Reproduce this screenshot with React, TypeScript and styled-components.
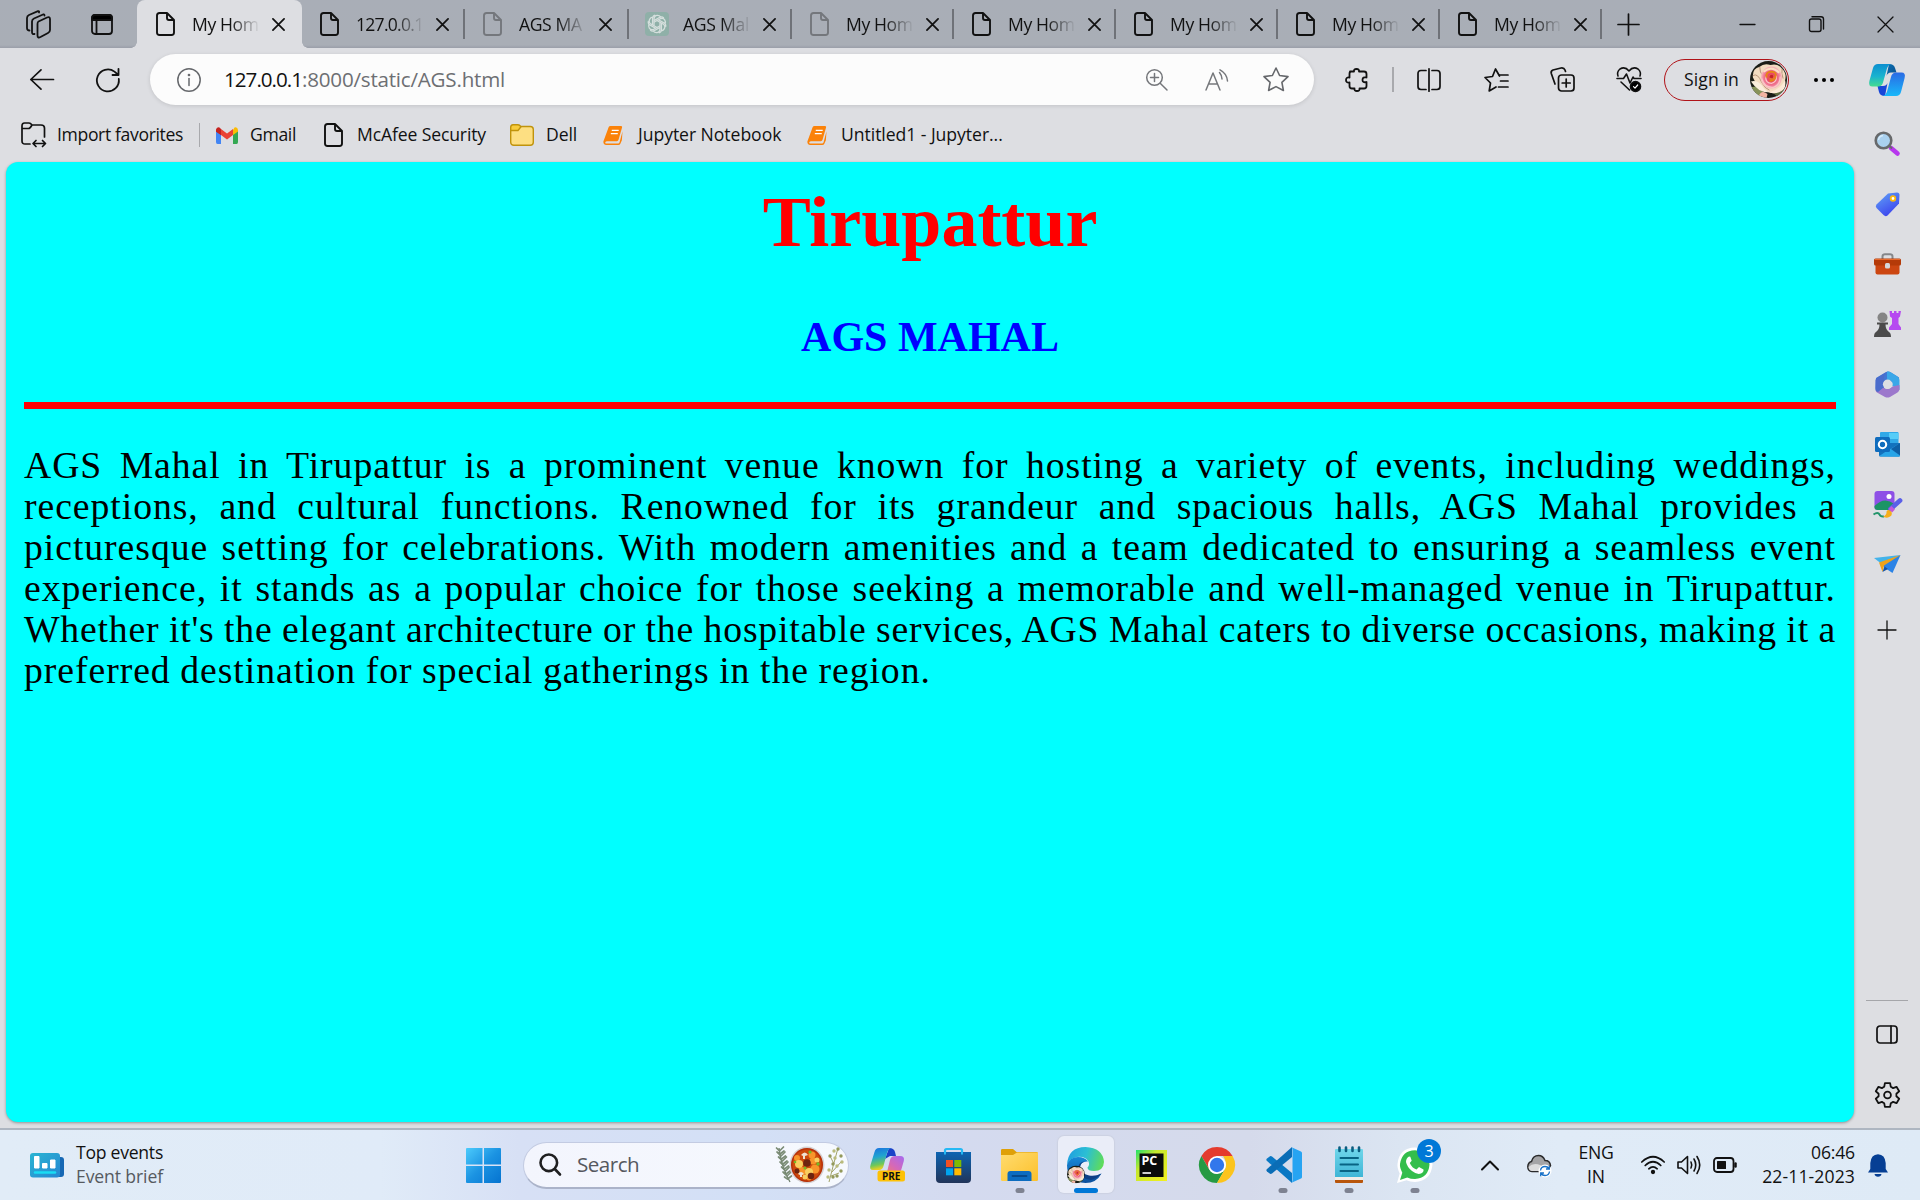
import React from "react";
import styled, { createGlobalStyle } from "styled-components";

const GlobalStyle = createGlobalStyle`
  * { box-sizing: border-box; }
  html, body { margin: 0; padding: 0; }
  body { width: 1920px; height: 1200px; overflow: hidden; font-family: "Open Sans", "Noto Sans", sans-serif; color: #111; }
  svg { display: block; flex: none; overflow: visible; }
`;

/* ---------- shared ---------- */

const Screen = styled.div`
  width: 1920px;
  height: 1200px;
  display: flex;
  flex-direction: column;
  background: #dddee2;
`;

const Label = styled.span<{ $size?: number; $track?: number; $color?: string }>`
  margin-bottom: 2px;
  font-size: ${(p) => p.$size ?? 17.6}px;
  letter-spacing: ${(p) => p.$track ?? 0}px;
  color: ${(p) => p.$color ?? "#111"};
  line-height: 22px;
  white-space: nowrap;
`;

const Slot = styled.span<{ $w: number; $ml?: number }>`
  flex: none;
  width: ${(p) => p.$w}px;
  margin-left: ${(p) => p.$ml ?? 0}px;
  display: flex;
  justify-content: center;
  align-items: center;
`;

const Rule = styled.span<{ $h: number; $ml?: number; $w?: number; $color?: string }>`
  flex: none;
  width: ${(p) => p.$w ?? 1}px;
  height: ${(p) => p.$h}px;
  margin-left: ${(p) => p.$ml ?? 0}px;
  background: ${(p) => p.$color ?? "#a8a9ad"};
`;

const Glyph = styled.svg.attrs({ xmlns: "http://www.w3.org/2000/svg" })<{ $color?: string; $weight?: number }>`
  fill: none;
  stroke: ${(p) => p.$color ?? "#111"};
  stroke-width: ${(p) => p.$weight ?? 1.6};
  stroke-linecap: round;
  stroke-linejoin: round;
`;

/* ---------- tab strip ---------- */

const TabStrip = styled.header`
  height: 48px;
  flex: none;
  display: flex;
  align-items: center;
  background: linear-gradient(#a9aeb7 0, #a9aeb6 45px, #9a9ea9 48px);
`;

const Tab = styled.div<{ $active?: boolean; $w: number }>`
  width: ${(p) => p.$w}px;
  height: 48px;
  flex: none;
  position: relative;
  display: flex;
  align-items: center;
  padding-left: ${(p) => (p.$active ? 19 : 18)}px;
  border-radius: 8px 8px 0 0;
  background: ${(p) => (p.$active ? "#dddee2" : "transparent")};
  ${(p) =>
    p.$active &&
    `
    &::before, &::after {
      content: "";
      position: absolute;
      bottom: 0;
      width: 6px;
      height: 6px;
    }
    &::before { left: -6px; background: radial-gradient(circle at 0 0, transparent 5.5px, #dddee2 6px); }
    &::after { right: -6px; background: radial-gradient(circle at 100% 0, transparent 5.5px, #dddee2 6px); }
  `}
`;

const TabTitle = styled.span<{ $track: number }>`
  width: 67px;
  margin-left: 17px;
  white-space: nowrap;
  font-size: 17.6px;
  line-height: 28px;
  letter-spacing: ${(p) => p.$track}px;
  color: #111;
  mask-image: linear-gradient(90deg, #000 38px, transparent 68px);
`;

const TabEnd = styled.span`
  margin-left: auto;
  width: 2px;
  height: 30px;
  background: #6f7278;
`;

const CloseMark = () => (
  <Glyph width="13" height="13" viewBox="0 0 14 14" $weight={1.9}>
    <path d="M1 1L13 13M13 1L1 13" />
  </Glyph>
);

const PageIcon = ({ faded = false }: { faded?: boolean }) => (
  <Glyph width="19" height="24" viewBox="0 0 19 24" $weight={1.9} $color={faded ? "#74777c" : "#111"}>
    <path d="M3.5 1H11L18 8V20.5Q18 23 15.5 23H3.5Q1 23 1 20.5V3.5Q1 1 3.5 1ZM11 1V6Q11 8 13 8H18" />
  </Glyph>
);

const ChatIcon = () => (
  <svg width="24" height="24" viewBox="0 0 24 24">
    <rect width="24" height="24" rx="4" fill="#8fb0a8" />
    <g fill="none" stroke="#d5dfdd" strokeWidth="1.3">
      {[0, 60, 120, 180, 240, 300].map((a) => (
        <path key={a} transform={`rotate(${a} 12 12)`} d="M9 13.8V7.2Q9 3.5 12.3 3.3Q14.4 3.2 15.7 4.8M9 8.6L14.8 5.3Q17 4.2 18.8 6" />
      ))}
    </g>
  </svg>
);

type TabInfo = { title: string; w: number; icon: "page" | "faded" | "chat"; track: number; active?: boolean };
const tabs: TabInfo[] = [
  { title: "My Hom", w: 165, icon: "page", track: -0.4, active: true },
  { title: "127.0.0.1", w: 163, icon: "page", track: -0.75 },
  { title: "AGS MA", w: 164, icon: "faded", track: -0.4 },
  { title: "AGS Mal", w: 163, icon: "chat", track: -0.3 },
  { title: "My Hom", w: 162, icon: "faded", track: -0.4 },
  { title: "My Hom", w: 162, icon: "page", track: -0.4 },
  { title: "My Hom", w: 162, icon: "page", track: -0.4 },
  { title: "My Hom", w: 162, icon: "page", track: -0.4 },
  { title: "My Hom", w: 162, icon: "page", track: -0.4 },
];

/* ---------- toolbar ---------- */

const Toolbar = styled.div`
  height: 63px;
  flex: none;
  display: flex;
  align-items: center;
`;

const AddressBar = styled.div`
  width: 1164px;
  height: 51px;
  margin-left: 30px;
  border-radius: 26px;
  background: #fcfcfc;
  box-shadow: 0 1px 4px rgba(0, 0, 0, 0.12);
  display: flex;
  align-items: center;
`;

const SignIn = styled.div`
  width: 125px;
  height: 42px;
  margin-left: 22px;
  padding: 0 1px 0 19px;
  border: 1.5px solid #b01218;
  border-radius: 21px;
  display: flex;
  align-items: center;
  justify-content: space-between;
`;

const Rose = ({ size }: { size: number }) => (
  <svg width={size} height={size} viewBox="0 0 38 38">
    <defs>
      <clipPath id={`rc${size}`}><circle cx="19" cy="19" r="19" /></clipPath>
      <radialGradient id={`rg${size}`}>
        <stop offset="0" stopColor="#e8901c" />
        <stop offset=".35" stopColor="#ea4466" />
        <stop offset=".75" stopColor="#f07f9a" />
        <stop offset="1" stopColor="#f8c6c0" />
      </radialGradient>
    </defs>
    <g clipPath={`url(#rc${size})`}>
      <rect width="38" height="38" fill="#1b1d16" />
      <path d="M0 27L8 26L14 32L9 38H0Z" fill="#87935a" />
      <path d="M24 33L34 27L38 34L30 38Z" fill="#5e6a40" />
      <path d="M3 17Q2 8 10 6Q14 2 21 4Q29 2 33 8Q38 13 36 20Q37 27 30 31Q24 35 17 31Q8 29 3 17Z" fill="#f3dcc0" />
      <path d="M1 21Q7 19 12 25Q15 30 20 32Q9 33 1 21Z" fill="#faeedc" />
      <path d="M36 20Q38 29 30 32Q24 34 20 32Q30 30 36 20Z" fill="#fbe9d6" />
      <path d="M3 15Q8 12 12 22Q15 28 20 30M10 6Q10 12 13 15M33 8Q32 13 34 18" stroke="#b08a70" strokeWidth=".9" fill="none" />
      <ellipse cx="22" cy="17" rx="11" ry="11.500" fill={`url(#rg${size})`} />
      <path d="M14 11Q22 4 30 12" fill="none" stroke="#fbe0c4" strokeWidth="2.200" />
      <path d="M12 18Q15 28 24 27Q31 25 31 16M16 16Q16 23 22 23Q28 21 27 15" fill="none" stroke="#fbc6c8" strokeWidth="1.300" />
      <path d="M17 17Q16 11 22 11Q28 11 26 17Q24 21 20 20" fill="none" stroke="#e6841a" strokeWidth="2" />
      <path d="M20 17Q20 14 22.500 14Q25 15 23 18Z" fill="#c8232e" />
      <path d="M9 36Q12 29 18 34L17 38H9Z" fill="#f2b4a2" />
    </g>
  </svg>
);

const CopilotIcon = () => (
  <svg width="36" height="32" viewBox="0 0 36 32">
    <defs>
      <linearGradient id="cpA" x1="0" y1="0" x2="0" y2="1"><stop offset="0" stopColor="#0c8fd0" /><stop offset=".55" stopColor="#19b3cf" /><stop offset="1" stopColor="#45dc90" /></linearGradient>
      <linearGradient id="cpB" x1="0" y1="1" x2="0" y2="0"><stop offset="0" stopColor="#18b8fa" /><stop offset="1" stopColor="#2a6ae4" /></linearGradient>
      <linearGradient id="cpC" x1="0" y1="0" x2="1" y2="1"><stop offset="0" stopColor="#0a6fb4" /><stop offset="1" stopColor="#0b4f8a" /></linearGradient>
    </defs>
    <path d="M20 0Q25 0 26 4L27.5 8.5H22Q18.500 8.500 17.500 12Z" fill="url(#cpC)" />
    <path d="M16 32Q11 32 10 28L8.5 22H14Q17.500 22 18.500 19Z" fill="#1746d8" />
    <path d="M9 0H22Q19 1 17.800 5L14 18.500Q13 22.500 9 22.500H3.500Q-1 22.500.4 17L4 4Q5.200 0 9 0Z" fill="url(#cpA)" />
    <path d="M27 32H14Q17 31 18.200 27L22 13Q23 8.500 27 8.500H32.500Q37 8.500 35.600 14L32 28Q30.800 32 27 32Z" fill="url(#cpB)" />
  </svg>
);

/* ---------- favourites ---------- */

const Favorites = styled.nav`
  height: 48px;
  flex: none;
  display: flex;
  align-items: center;
`;

const Fav = styled.div<{ $x: number; $gap: number }>`
  width: ${(p) => p.$x}px;
  flex: none;
  display: flex;
  align-items: center;
  gap: ${(p) => p.$gap}px;
`;

const BookIcon = () => (
  <svg width="20" height="21" viewBox="0 0 21 20">
    <path d="M6 1.200Q6.400 0 8 0H19Q20.500 0 20 1.600L16.300 14.500Q15.800 16 14.500 16H4Q2.300 16.300 2.300 17.500Q2.500 18.500 4 18.500H15.800Q17 18.500 17.400 17.200L20.500 5.500L19.800 15L18.200 18.600Q17.600 20 16 20H3.500Q.2 19.800.4 16.200Z" fill="#fb8209" />
    <path d="M9.200 4.500H16.500M8.200 8H15.500" stroke="#fff" strokeWidth="1.300" />
  </svg>
);

/* ---------- middle: page + sidebar ---------- */

const Middle = styled.div`
  height: 966px;
  flex: none;
  display: flex;
  padding-left: 6px;
`;

const Page = styled.main`
  width: 1848px;
  height: 960px;
  padding: 19px 18px 0;
  border-radius: 12px;
  background: #00ffff;
  box-shadow: 0 1px 3px rgba(0, 0, 0, 0.35);
  font-family: "Liberation Serif", "Times New Roman", serif;
`;

const Title = styled.h1`
  margin: 0;
  font-size: 72px;
  line-height: 82px;
  text-align: center;
  color: #ff0000;
`;

const Subtitle = styled.h2`
  margin: 50px 0 0;
  font-size: 42px;
  line-height: 48px;
  text-align: center;
  color: #0000ff;
`;

const RedLine = styled.hr`
  margin: 41px 0 36px;
  height: 7px;
  border: 0;
  background: #ff0000;
`;

const Line = styled.div<{ $last?: boolean; $track?: number }>`
  height: 41.1px;
  font-size: 37.7px;
  line-height: 41px;
  white-space: nowrap;
  letter-spacing: ${(p) => p.$track ?? 0.95}px;
  word-spacing: -0.75px;
  color: #000;
  text-align: left;
  text-align-last: ${(p) => (p.$last ? "left" : "justify")};
`;

const lines = [
  "AGS Mahal in Tirupattur is a prominent venue known for hosting a variety of events, including weddings,",
  "receptions, and cultural functions. Renowned for its grandeur and spacious halls, AGS Mahal provides a",
  "picturesque setting for celebrations. With modern amenities and a team dedicated to ensuring a seamless event",
  "experience, it stands as a popular choice for those seeking a memorable and well-managed venue in Tirupattur.",
  "Whether it's the elegant architecture or the hospitable services, AGS Mahal caters to diverse occasions, making it a",
  "preferred destination for special gatherings in the region.",
];

const Sidebar = styled.aside`
  width: 66px;
  height: 960px;
  display: flex;
  flex-direction: column;
  align-items: center;
  padding-top: 12px;
`;

const SideItem = styled.div<{ $h?: number }>`
  height: ${(p) => p.$h ?? 60}px;
  flex: none;
  display: flex;
  align-items: center;
  justify-content: center;
`;

const SideRule = styled.div`
  width: 42px;
  height: 1px;
  margin-top: auto;
  background: #a5a6aa;
`;

const Upper = styled.div`
  display: flex;
  flex: none;
  height: 114px;
`;

const UpperBars = styled.div`
  width: 1854px;
  display: flex;
  flex-direction: column;
`;

const UpperSide = styled.div`
  width: 66px;
  display: flex;
  flex-direction: column;
  align-items: center;
`;

/* ---------- taskbar ---------- */

const Taskbar = styled.footer`
  height: 72px;
  flex: none;
  display: flex;
  align-items: center;
  border-top: 2px solid #aeb6c1;
  background: linear-gradient(90deg, #e1ecf7 0, #e0ebf8 380px, #d7e0f5 520px, #d3e0f6 760px, #d4daef 960px, #d5daeb 1250px, #dbe5f2 1400px, #e0ebf7 1560px, #deeaf6 1920px);
`;

const TwoLines = styled.div<{ $align: string; $ml: number; $w: number }>`
  width: ${(p) => p.$w}px;
  margin-left: ${(p) => p.$ml}px;
  flex: none;
  display: flex;
  flex-direction: column;
  align-items: ${(p) => p.$align};
`;

const SearchBox = styled.div`
  width: 326px;
  height: 47px;
  margin: 0 6px 0 7px;
  padding: 0 6px 0 15px;
  border: 1.5px solid #c3cbe2;
  border-bottom: 2px solid #abb3c9;
  border-radius: 24px;
  background: linear-gradient(90deg, #f3f5fd, #f6f9fe);
  display: flex;
  align-items: center;
`;

const AppButton = styled.div<{ $active?: boolean; $run?: boolean }>`
  width: 65.9px;
  height: 70px;
  flex: none;
  position: relative;
  display: flex;
  align-items: center;
  justify-content: center;
  &::before {
    content: "";
    display: ${(p) => (p.$active ? "block" : "none")};
    position: absolute;
    left: 5px;
    top: 6px;
    width: 56px;
    height: 57px;
    border-radius: 6px;
    background: #eaedf8;
    box-shadow: 0 0 1px 1px #ccd1e2;
  }
  &::after {
    content: "";
    display: ${(p) => (p.$active || p.$run ? "block" : "none")};
    position: absolute;
    bottom: 7px;
    left: 50%;
    width: ${(p) => (p.$active ? 24 : 9)}px;
    height: 5px;
    border-radius: 3px;
    transform: translateX(-50%);
    background: ${(p) => (p.$active ? "#0078d7" : "#7e8291")};
  }
  > svg { position: relative; }
`;

const Badge = styled.span`
  position: absolute;
  left: 35px;
  top: 9px;
  width: 24px;
  height: 24px;
  border-radius: 12px;
  background: #0078d7;
  color: #fff;
  font-size: 16px;
  line-height: 24px;
  text-align: center;
`;

const WeatherIcon = () => (
  <svg width="34" height="25" viewBox="0 0 34 25">
    <defs><linearGradient id="wi" x1="0" y1="0" x2="1" y2="1"><stop offset="0" stopColor="#2bb5d2" /><stop offset="1" stopColor="#2487d3" /></linearGradient></defs>
    <rect x="20" y="4" width="14" height="20" rx="3" fill="#1668b4" />
    <rect y="0" width="30" height="24.500" rx="3" fill="url(#wi)" />
    <path d="M4.500 3.500H9V15H4.500ZM12.500 10.500H17V15H12.500ZM20.500 7H25V15H20.500Z" fill="#fff" stroke="#fff" strokeLinejoin="round" />
    <path d="M5 19.500H25" stroke="#19dcf4" strokeWidth="2.500" strokeLinecap="round" />
  </svg>
);

const StartIcon = () => (
  <svg width="35" height="35" viewBox="0 0 35 35">
    <defs><linearGradient id="st" x1="0" y1="0" x2="1" y2="1" gradientUnits="objectBoundingBox"><stop offset="0" stopColor="#4ccbfc" /><stop offset=".5" stopColor="#1b93e2" /><stop offset="1" stopColor="#0573d0" /></linearGradient></defs>
    <path d="M1 0H16.500V16.500H0V1Q0 0 1 0ZM18 0H34Q35 0 35 1V16.500H18ZM0 18H16.500V35H1Q0 35 0 34ZM18 18H35V34Q35 35 34 35H18Z" fill="url(#st)" />
  </svg>
);

const StewIcon = () => {
  const herb = [4, 9, 14, 19, 24, 29];
  return (
    <svg width="68" height="42" viewBox="0 0 68 42">
      <path d="M3 4Q5 22 14 38" stroke="#6f7f6c" strokeWidth="1.300" fill="none" />
      {herb.map((y, i) => (
        <path key={y} d={`M${3.500 + i * 1.500} ${y + 3}l-3-3m3 3l4-4M${4 + i * 1.500} ${y + 6}l-3-2m3 2l4-3`} stroke="#7b8c76" strokeWidth="1.700" strokeLinecap="round" />
      ))}
      <path d="M53 38Q57 22 62 4M56 28L65 18M55 32L63 29M58 20L54 12" stroke="#a2a368" strokeWidth="1" fill="none" />
      {[[62, 5], [58, 7], [54, 12], [59, 14], [65, 12], [66, 18], [57, 20], [61, 22], [65, 27], [53, 26], [61, 32], [52, 33], [57, 33]].map(([x, y], i) => (
        <circle key={i} cx={x} cy={y} r="1.700" fill={i % 2 ? "#b9bb7c" : "#93995a"} />
      ))}
      <ellipse cx="31" cy="21" rx="17.500" ry="18.500" fill="#d4d0d2" />
      <ellipse cx="31" cy="21" rx="16" ry="17" fill="#b83008" />
      <ellipse cx="31" cy="21" rx="14.500" ry="15.500" fill="#cd4a0c" />
      <g fill="#f8952a"><circle cx="36" cy="11" r="3.500" /><circle cx="26" cy="27" r="4" /><circle cx="39" cy="25" r="4.500" /><circle cx="37" cy="17" r="3.500" /><circle cx="21" cy="14" r="3" /><circle cx="33" cy="34" r="2.500" /></g>
      <g fill="#f8cf60"><circle cx="23" cy="20" r="4" /><circle cx="33" cy="28" r="4" /><circle cx="41" cy="16" r="2.500" /><circle cx="29" cy="33" r="2.500" /></g>
      <g fill="#6d2410"><circle cx="31" cy="19" r="3.800" /><circle cx="35" cy="32" r="3.200" /><circle cx="21" cy="27" r="2.500" /></g>
      <g fill="#eee3d2"><path d="M25 11Q29 6 32 11L29 12V15H27V12ZM22 30Q25 26 28 30L26 31V33H24V31Z" /></g>
      <g fill="#75b928"><circle cx="34" cy="8" r="1.600" /><circle cx="42" cy="20" r="1.700" /><circle cx="29" cy="24" r="1.500" /><circle cx="19" cy="18" r="1.300" /></g>
    </svg>
  );
};

const CopilotPre = () => (
  <svg width="35" height="34" viewBox="0 0 35 34">
    <defs>
      <linearGradient id="pa" x1="0" y1="0" x2=".2" y2="1"><stop offset="0" stopColor="#1a6fe0" /><stop offset=".45" stopColor="#20a5d0" /><stop offset=".8" stopColor="#70c858" /><stop offset="1" stopColor="#e8d024" /></linearGradient>
      <linearGradient id="pb" x1="1" y1="0" x2=".2" y2="1"><stop offset="0" stopColor="#a56af0" /><stop offset=".5" stopColor="#d568b8" /><stop offset="1" stopColor="#fa8060" /></linearGradient>
    </defs>
    <path d="M19 0Q24 0 25 4L26 8H20L15 11Z" fill="#1a42c8" />
    <path d="M9 0H21Q18 1 17 5L13.500 18Q12.500 22 9 22H3Q-1 22 .5 17L4.500 4Q5.500 0 9 0Z" fill="url(#pa)" />
    <path d="M26 30H12Q16 28 17 24L20 12Q21 8 25 8H30Q35 8 33.800 13L30 26Z" fill="url(#pb)" />
    <rect x="7.500" y="22.500" width="27.500" height="11" rx="2.500" fill="#fdc106" />
    <text x="21.200" y="31.700" textAnchor="middle" fontFamily="Open Sans" fontWeight="700" fontSize="10" fill="#111">PRE</text>
  </svg>
);

const StoreIcon = () => (
  <svg width="35" height="35" viewBox="0 0 35 35">
    <defs><linearGradient id="so" x1="0" y1="0" x2="0" y2="1"><stop offset="0" stopColor="#0d64b2" /><stop offset="1" stopColor="#213459" /></linearGradient></defs>
    <path d="M9 6V2.500Q9 1 10.500 1H24.500Q26 1 26 2.500V6" fill="none" stroke="#25b9f4" strokeWidth="2.200" />
    <path d="M0 4H35V31Q35 35 31 35H4Q0 35 0 31Z" fill="url(#so)" />
    <path d="M9 4V6.500M26 4V6.500" stroke="#25b9f4" strokeWidth="2" />
    <path d="M10 12H17V19H10Z" fill="#f25022" /><path d="M18.300 12H25.300V19H18.300Z" fill="#7fba00" />
    <path d="M10 20.300H17V27.300H10Z" fill="#00a4ef" /><path d="M18.300 20.300H25.300V27.300H18.300Z" fill="#ffb900" />
  </svg>
);

const FolderIcon = () => (
  <svg width="37" height="34" viewBox="0 0 37 34">
    <defs><linearGradient id="fo" x1="0" y1="0" x2="1" y2="1"><stop offset="0" stopColor="#ffdc70" /><stop offset="1" stopColor="#fcc02a" /></linearGradient></defs>
    <path d="M0 2Q0 1 1.500 1H12L15.500 4H35.500Q37 4 37 5.500V12H0Z" fill="#dfa008" />
    <path d="M0 7H12L16 4.500H37V32Q37 33 35.500 33H1.500Q0 33 0 32Z" fill="url(#fo)" />
    <path d="M6.500 33V26Q6.500 23 9.500 23H27.500Q30.500 23 30.500 26V33Z" fill="#0c6cc0" />
    <path d="M11.500 28H25.500" stroke="#064a8c" strokeWidth="1.800" strokeLinecap="round" />
  </svg>
);

const EdgeIcon = () => (
  <svg width="37" height="36" viewBox="0 0 37 36">
    <defs>
      <linearGradient id="ea" x1="0" y1=".3" x2="1" y2=".5"><stop offset="0" stopColor="#1f9fe0" /><stop offset=".5" stopColor="#2bbfd4" /><stop offset="1" stopColor="#5fdc5a" /></linearGradient>
      <linearGradient id="eb" x1="0" y1="0" x2="0" y2="1"><stop offset="0" stopColor="#1789d8" /><stop offset="1" stopColor="#0d4f9c" /></linearGradient>
    </defs>
    <path d="M0 18Q1 0 18.500 0Q36 1 37 15Q36.500 24 27 24Q20.500 24 20.500 20.500Q23 18 21.500 14.500Q18 9 10 10Q3 11 0 18Z" fill="url(#ea)" />
    <path d="M0 18Q3 10 11 10Q18 10 21 14.500Q13.500 14 13 20.500Q13.500 27 22 29Q29 30 34.500 26.500Q29.500 36 18.500 36Q0 35 0 18Z" fill="url(#eb)" />
    <path d="M11.500 19Q10 31 24 33Q30 31.500 34.500 26.500Q29 29.500 22 28.500Q13.500 26.500 13 20Q13.500 15.500 18 14.500Q13 14.500 11.500 19Z" fill="#0d3f86" />
    <g transform="translate(0 18.500) scale(.94)"><Rose size={19} /></g>
  </svg>
);

const PyCharmIcon = () => (
  <svg width="31" height="31" viewBox="0 0 31 31">
    <defs><linearGradient id="py" x1="0" y1="0" x2="1" y2="1"><stop offset="0" stopColor="#21e06c" /><stop offset=".35" stopColor="#c6e82c" /><stop offset="1" stopColor="#f3f020" /></linearGradient></defs>
    <rect width="31" height="31" fill="url(#py)" />
    <rect x="3.500" y="3.500" width="24" height="23.500" fill="#0a0c0a" />
    <text x="5.500" y="15" fontFamily="Open Sans" fontWeight="700" fontSize="12.500" fill="#fff">PC</text>
    <path d="M6.500 23H15" stroke="#fff" strokeWidth="1.600" />
  </svg>
);

const ChromeIcon = () => (
  <svg width="36" height="36" viewBox="0 0 36 36">
    <path d="M18 0A18 18 0 0 1 33.600 9H18L10.200 22.500L2.400 9A18 18 0 0 1 18 0Z" fill="#e43b2e" />
    <path d="M2.400 9L10.200 22.500Q13 27 18 27L25.800 22.500L18 36A18 18 0 0 1 2.400 9Z" fill="#269a43" />
    <path d="M33.600 9A18 18 0 0 1 18 36L25.800 22.500Q28.500 15 24 9Z" fill="#fcc41c" />
    <circle cx="18" cy="18" r="9" fill="#fff" /><circle cx="18" cy="18" r="7.200" fill="#3277ec" />
  </svg>
);

const CodeIcon = () => (
  <svg width="37" height="36" viewBox="0 0 37 36">
    <path d="M2 11.500L5 9.200Q6 8.800 7 9.500L27 26V36L1.800 13.800Q.8 12.500 2 11.500Z" fill="#0a78c4" />
    <path d="M2 24.500L5 26.800Q6 27.200 7 26.500L27 10V0L1.800 22.200Q.8 23.500 2 24.500Z" fill="#0a6db6" />
    <path d="M26.500.2L36 4.500Q37 5 37 6V30Q37 31 36 31.500L26.500 35.800Q27.500 35 27.500 33V3Q27.500 1 26.500.2Z" fill="#27a4f2" />
  </svg>
);

const NotepadIcon = () => (
  <svg width="28" height="36" viewBox="0 0 28 36">
    <defs><linearGradient id="np" x1="0" y1="0" x2="0" y2="1"><stop offset="0" stopColor="#6fd6ea" /><stop offset="1" stopColor="#3fb5d6" /></linearGradient></defs>
    <path d="M0 30H28V35Q28 36 27 36H1Q0 36 0 35Z" fill="#b8560c" />
    <rect y="29" width="28" height="4" fill="#f0ece8" />
    <path d="M0 3Q0 2 1 2H27Q28 2 28 3V30H0Z" fill="url(#np)" />
    <path d="M4.500.5V4M11 .5V4M17.500.5V4M24 .5V4" stroke="#0b5d80" strokeWidth="2.600" strokeLinecap="round" />
    <path d="M5.500 11H23M5.500 17.500H23M5.500 24H23" stroke="#086484" strokeWidth="2" strokeLinecap="round" />
  </svg>
);

const WhatsAppIcon = () => (
  <svg width="36" height="36" viewBox="0 0 36 36">
    <path d="M0 36L2.700 26.500Q0 21 .5 17Q2 1 18 .5Q34 2 35.500 17.500Q34 34 18 35Q13 35 9.500 33.300Z" fill="#fff" />
    <path d="M3 33L5.300 25.700Q2.500 20 3 17Q5 3.500 18 3.200Q31 4 32.500 17.500Q31.500 31 18 32Q13.500 32 10.200 30.500Z" fill="#33be4c" />
    <path d="M12 9.500Q9 11 9 15Q10 20 15 24Q20 28 24 26.500Q27 25 26.500 22.500L22 20L19.500 22.500Q15 21 12.800 16L14.700 13.800L13.300 9.800Z" fill="#fff" />
  </svg>
);

/* ---------- root ---------- */

export default function App() {
  return (
    <Screen>
      <GlobalStyle />
      <TabStrip>
        <Slot $w={25} $ml={26}>
          <Glyph width="25" height="29" viewBox="0 0 25 29" $weight={1.8}>
            <path d="M12.500 11.500L21 7.500Q24 6.500 24 9V20Q24 22 22 23L14.500 27Q11.500 28.500 11.500 25.500V14Q11.500 12 12.500 11.500Z" />
            <path d="M8.500 24Q6 24.500 6 22V11.500Q6 9.500 8 8.500L17 4.500M3.500 20.500Q1 20.500 1 18V8Q1 6 3 5L12 1.200Q13.500.8 13 2.500M17 4.500Q18.500 4 18.500 5.500" />
          </Glyph>
        </Slot>
        <Slot $w={22} $ml={40}>
          <Glyph width="22" height="21" viewBox="0 0 22 21" $weight={1.8}>
            <rect x="1" y="1" width="20" height="19" rx="3" />
            <path d="M1 6V4Q1 1 4 1H18Q21 1 21 4V6Z" fill="#000" />
            <path d="M5.500 6V20" />
          </Glyph>
        </Slot>
        <Slot $w={24} />
        {tabs.map((t, i) => (
          <Tab key={i} $w={t.w} $active={t.active}>
            {t.icon === "chat" ? <Slot $w={19}><ChatIcon /></Slot> : <PageIcon faded={t.icon === "faded"} />}
            <TabTitle $track={t.track}>{t.title}</TabTitle>
            <Slot $w={14} $ml={12}><CloseMark /></Slot>
            {!t.active && <TabEnd />}
          </Tab>
        ))}
        <Slot $w={22} $ml={15}>
          <Glyph width="21" height="21" viewBox="0 0 21 21" $weight={1.7}><path d="M10.500 0V21M0 10.500H21" /></Glyph>
        </Slot>
        <Slot $w={16} $ml={100}>
          <Glyph width="15" height="15" viewBox="0 0 15 15" $weight={1.300}><path d="M0 7.500H15" /></Glyph>
        </Slot>
        <Slot $w={16} $ml={53}>
          <Glyph width="15" height="16" viewBox="0 0 15 16" $weight={1.400}>
            <rect x=".5" y="3" width="11.500" height="12.500" rx="2" /><path d="M3 .7H12Q14.500.7 14.500 3V13" />
          </Glyph>
        </Slot>
        <Slot $w={16} $ml={53}>
          <Glyph width="15" height="15" viewBox="0 0 15 15" $weight={1.300}><path d="M0 0L15 15M15 0L0 15" /></Glyph>
        </Slot>
      </TabStrip>

      <Upper>
        <UpperBars>
          <Toolbar>
            <Slot $w={24} $ml={30}>
              <Glyph width="24" height="21" viewBox="0 0 24 21" $weight={1.700}><path d="M23.500 10.500H.8M11 .8L.8 10.500L11 20.200" /></Glyph>
            </Slot>
            <Slot $w={24} $ml={42}>
              <Glyph width="24" height="24" viewBox="0 0 24 24" $weight={1.800}>
                <path d="M22.800 11A11 11 0 1 1 18.500 3.600L22.500 7M22.500.8V7H16.500" />
              </Glyph>
            </Slot>
            <AddressBar>
              <Slot $w={24} $ml={27}>
                <Glyph width="24" height="24" viewBox="0 0 24 24" $color="#66686c" $weight={1.500}>
                  <circle cx="12" cy="12" r="11.200" /><path d="M12 10.500V17.500" /><circle cx="12" cy="7" r=".6" fill="#66686c" />
                </Glyph>
              </Slot>
              <Slot $w={23} />
              <Label $size={20.6} $track={-0.98}>127.0.0.1</Label>
              <Label $size={20.6} $track={-0.22} $color="#6d6f73">:8000/static/AGS.html</Label>
              <Slot $w={22} $ml={641}>
                <Glyph width="22" height="22" viewBox="0 0 22 22" $color="#75777b" $weight={1.500}>
                  <circle cx="8.500" cy="8.500" r="7.800" /><path d="M14.200 14.200L21 21M8.500 4.500V12.500M4.500 8.500H12.500" />
                </Glyph>
              </Slot>
              <Slot $w={24} $ml={37}>
                <Glyph width="24" height="22" viewBox="0 0 24 22" $color="#75777b" $weight={1.500}>
                  <path d="M1 21L8 4L15 21M3.500 15H12.500M14.500 3.500Q17 6.500 17 10M15 .8Q22 4.500 22.500 12" />
                </Glyph>
              </Slot>
              <Slot $w={26} $ml={34}>
                <Glyph width="26" height="25" viewBox="0 0 26 25" $color="#66686c" $weight={1.600}>
                  <path d="M13 1L16.600 8.500L25 9.600L18.900 15.300L20.400 23.500L13 19.600L5.600 23.500L7.100 15.300L1 9.600L9.400 8.500Z" />
                </Glyph>
              </Slot>
            </AddressBar>
            <Slot $w={24} $ml={31}>
              <Glyph width="24" height="24" viewBox="0 0 24 24" $weight={1.800}>
                <path d="M5 3.500H9Q8.500 1 11.500 1Q14.500 1 14 3.500H19Q21.500 3.500 21.500 6V9.500Q17.500 8.500 17.500 12Q17.500 15 21.500 14V18Q21.500 20.500 19 20.500H14.500Q15 23 12 23Q9 23 9.500 20.500H7Q4.500 20.500 4.500 18V14.500Q1 15 1 12Q1 9 4.500 9.500V6Q4.500 3.500 6 3.500" />
              </Glyph>
            </Slot>
            <Rule $h={25} $w={2} $ml={23} />
            <Slot $w={24} $ml={23}>
              <Glyph width="24" height="24" viewBox="0 0 24 24" $weight={1.700}>
                <path d="M9 2.500H4Q1 2.500 1 5.500V18.500Q1 21.500 4 21.500H9M15 2.500H20Q23 2.500 23 5.500V18.500Q23 21.500 20 21.500H15M12 .8V23.200" />
              </Glyph>
            </Slot>
            <Slot $w={26} $ml={42}>
              <Glyph width="25" height="24" viewBox="0 0 25 24" $weight={1.700}>
                <path d="M15.500 7H24M16.500 13H24M14.500 19H24" />
                <path d="M15.500 8L11.500 1L8.500 8.500L1 9.500L6.500 15L5.200 23L12 19" />
              </Glyph>
            </Slot>
            <Slot $w={25} $ml={41}>
              <Glyph width="25" height="25" viewBox="0 0 25 25" $weight={1.700}>
                <rect x="8.500" y="8" width="15.500" height="16" rx="3" /><path d="M16.200 12V20M12.200 16H20.200" />
                <path d="M5 17L1.300 6.500Q.5 4 3 3L11 1Q14 .5 15 3L15.500 4.500" />
              </Glyph>
            </Slot>
            <Slot $w={26} $ml={41}>
              <Glyph width="26" height="25" viewBox="0 0 26 25" $weight={1.600}>
                <path d="M2 9Q.5 5 4 2Q9-1 13 4Q17-1 22 2Q25.500 5 24 9M1 11.500H7.500L10.500 7L14 16L17 10L18 11.500H25M5 15L13.500 23" />
                <circle cx="19.500" cy="19.500" r="5" fill="#000" /><path d="M17.500 19.700L19 21.200L21.700 18" stroke="#fff" strokeWidth="1.200" />
              </Glyph>
            </Slot>
            <SignIn>
              <Label $track={0.1}>Sign in</Label>
              <Rose size={37} />
            </SignIn>
            <Slot $w={22} $ml={24}>
              <svg width="20" height="4" viewBox="0 0 20 4"><circle cx="2" cy="2" r="2" /><circle cx="10" cy="2" r="2" /><circle cx="18" cy="2" r="2" /></svg>
            </Slot>
          </Toolbar>

          <Favorites>
            <Slot $w={21} />
            <Fav $x={195} $gap={11}>
              <Glyph width="25" height="26" viewBox="0 0 25 26" $weight={1.700}>
                <path d="M9 22H4Q1 22 1 19V4Q1 1 3.500 1H8Q9.500 1 11 3H20Q23.500 3 23.500 6V15M1 6.500H7.500Q9 6.500 11 3" />
                <path d="M12.500 21.500H24M15 18.500L12 21.500L15 24.500M21.500 18.500L24.500 21.500L21.500 24.500" />
              </Glyph>
              <Label $track={-0.36}>Import favorites</Label>
              <Rule $h={24} $ml={5} />
            </Fav>
            <Fav $x={108} $gap={12}>
              <svg width="22" height="17" viewBox="0 0 22 17">
                <path d="M0 3V15Q0 17 1.500 17H5V6Z" fill="#4285f4" /><path d="M22 3V15Q22 17 20.500 17H17V6Z" fill="#34a853" />
                <path d="M17 3V8L22 4.500V3Q21.500-.5 18.500.5Z" fill="#fbbc04" /><path d="M0 3V4.500L5 8V3Q2-.5 0 3Z" fill="#c5221f" />
                <path d="M5 8V2L11 6.500L17 2V8L11 12.500Z" fill="#ea4335" /><path d="M0 3Q.5-.5 3.500.5L5 2V8L0 4.500Z" fill="#c5221f" />
              </svg>
              <Label $track={-0.35}>Gmail</Label>
            </Fav>
            <Fav $x={186} $gap={14}><PageIcon /><Label $track={-0.14}>McAfee Security</Label></Fav>
            <Fav $x={93} $gap={12}>
              <svg width="24" height="22" viewBox="0 0 24 22">
                <rect x=".7" y="2.500" width="22.600" height="18.800" rx="3" fill="#fddf82" stroke="#c0930c" strokeWidth="1.400" />
                <path d="M.7 6V3.500Q.7.700 3 .7H8Q9.500.7 11 2.800L8 6.500H.7Z" fill="#f8cc3c" stroke="#c0930c" strokeWidth="1.400" />
              </svg>
              <Label $track={-0.13}>Dell</Label>
            </Fav>
            <Fav $x={204} $gap={15}><BookIcon /><Label $track={-0.05}>Jupyter Notebook</Label></Fav>
            <Fav $x={220} $gap={14}><BookIcon /><Label $track={-0.05}>Untitled1 - Jupyter...</Label></Fav>
          </Favorites>
        </UpperBars>

        <UpperSide>
          <SideItem $h={64}><CopilotIcon /></SideItem>
          <SideItem $h={62}>
            <svg width="26" height="25" viewBox="0 0 26 25">
              <path d="M17 17L23.500 22.500" stroke="#b737ee" strokeWidth="4.600" strokeLinecap="round" />
              <path d="M15 14.500L18 17.500" stroke="#68696c" strokeWidth="2" />
              <circle cx="9.500" cy="9.500" r="7.800" fill="#a9d0ee" stroke="#67696b" strokeWidth="2.600" />
              <path d="M4.500 9Q5 5 9 4.500" stroke="#d6ebfa" strokeWidth="1.500" fill="none" />
            </svg>
          </SideItem>
        </UpperSide>
      </Upper>

      <Middle>
        <Page>
          <Title>Tirupattur</Title>
          <Subtitle>AGS MAHAL</Subtitle>
          <RedLine />
          {lines.map((l, i) => (
            <Line key={i} $last={i === 5} $track={i === 4 ? 0.8 : 0.95}>{l}</Line>
          ))}
        </Page>
        <Sidebar>
          <SideItem>
            <svg width="25" height="25" viewBox="0 0 25 25">
              <defs><linearGradient id="tg" x1="0" y1="0" x2=".6" y2="1"><stop offset="0" stopColor="#62a6f6" /><stop offset="1" stopColor="#3c44ee" /></linearGradient></defs>
              <path d="M13 1.500L22 .5Q24.500.5 24.500 3L24 11.500L12.500 23.500Q10.500 25 8.500 23L1.500 16Q0 14 1.500 12.500Z" fill="url(#tg)" />
              <circle cx="18" cy="6.500" r="2.300" fill="#fff" stroke="#fcb80c" strokeWidth="1.800" />
            </svg>
          </SideItem>
          <SideItem>
            <svg width="27" height="22" viewBox="0 0 27 22">
              <path d="M8.500 6V3.500Q8.500 1.200 11 1.200H16Q18.500 1.200 18.500 3.500V6" fill="none" stroke="#85878a" strokeWidth="2" />
              <rect x="1.500" y="9" width="24" height="12.500" rx="2" fill="#cc4611" />
              <rect x="0" y="5.500" width="27" height="7" rx="1.500" fill="#b43a08" /><path d="M1 6.500H26" stroke="#e86a2c" />
              <rect x="11" y="10" width="5" height="5.500" rx="1.500" fill="#d6d8da" />
            </svg>
          </SideItem>
          <SideItem>
            <svg width="27" height="28" viewBox="0 0 27 28">
              <path d="M15.500 1H18V3H20V1H22.500V3H24.500V1H27L26 6.500L24.500 8V14L27 17.500V20H15V17.500L18 14V8L16 6.500Z" fill="#b64af0" />
              <circle cx="8.500" cy="7.500" r="5" fill="#858585" />
              <path d="M3 12.500H14V14.500H11.500Q11.500 19.500 15 22Q17 23 17 27H0Q0 23 2 22Q5.500 19.500 5.500 14.500H3Z" fill="#4b4b4b" />
            </svg>
          </SideItem>
          <SideItem>
            <svg width="25" height="27" viewBox="0 0 25 27">
              <path d="M1 7L11 1Q13.500 0 16 1.500L24 6.500V14.500L16 10.500Q12.500 8 9 11V18L3 21Q0 19 .5 17Z" fill="#4176d4" />
              <path d="M12 .5Q14 0 16 1.500L22.500 5.500Q24.500 7 24.500 9V19L17.500 15V12Q17 9 12 8.500Z" fill="#3aa7e8" />
              <path d="M24.500 14V18.500Q24 20.500 22.500 21.500L15 26Q12.500 27 10 26L2 21.500Q1 21 .5 19L9 16.500Q12.500 20 17.500 15.500Z" fill="#9c78cc" />
              <path d="M6 4.500L12 1Q8 4 9 11V16L3 21Q0 20 .5 17V9Q1 7 6 4.500Z" fill="#4a6ccc" />
              <circle cx="12.600" cy="13.300" r="4.700" fill="#dddee2" />
            </svg>
          </SideItem>
          <SideItem>
            <svg width="25" height="25" viewBox="0 0 25 25">
              <rect x="5" y="0" width="18.500" height="14" rx="1" fill="#31a9e8" /><path d="M14 1H23.500V7H14Z" fill="#56cdf8" />
              <path d="M4 11L25 11V23Q25 24.500 23.500 24.500H5Q4 24.500 4 23Z" fill="#1372bd" /><path d="M4 24L25 11V23.500Q25 24.500 23.500 24.500Z" fill="#2f9fe5" />
              <path d="M15 17L25 24Q24.500 24.500 23.500 24.500H5L13 18Z" fill="#28a5e8" /><path d="M25 11V23.500L16 17Z" fill="#0e5fa5" />
              <rect x="0" y="5" width="15" height="15" rx="1.500" fill="#0f6cbd" />
              <circle cx="7.500" cy="12.500" r="3.700" fill="none" stroke="#fff" strokeWidth="2.100" />
            </svg>
          </SideItem>
          <SideItem>
            <svg width="28" height="27" viewBox="0 0 28 27">
              <rect x="1.500" y="0" width="20" height="19" rx="3" fill="#8e50e6" />
              <circle cx="16" cy="5.500" r="2.500" fill="#fff" /><path d="M1.500 15Q11 5 21.500 13V16Q21.500 19 18.500 19H4.500Q1.500 19 1.500 16Z" fill="#1c9465" />
              <path d="M.5 23.500Q5 20.500 6.500 23.500Q7.500 26 11 25.500" fill="none" stroke="#22946a" strokeWidth="2" />
              <path d="M17.500 18L27 9.500" stroke="#5a5fe8" strokeWidth="4.800" strokeLinecap="round" />
              <path d="M17 16.500L20.500 20" stroke="#c557d8" strokeWidth="4" />
              <path d="M10 25.500Q14 24 13.500 20.500Q15.500 17.500 18.500 21Q20 25 15 26.500Q12 27 10 25.500Z" fill="#f6ae1a" />
            </svg>
          </SideItem>
          <SideItem>
            <svg width="27" height="18" viewBox="0 0 27 18">
              <path d="M0 3L26.500 0L6.500 8Z" fill="#43b3ea" /><path d="M6.500 8L26.500 0L18.500 18L11 13Z" fill="#2b83e6" />
              <path d="M5 7.500L26.500 0L10 10.500L8.500 17Z" fill="#eea21a" /><path d="M8.500 17L10.500 11.500L14 14Z" fill="#1453a4" />
            </svg>
          </SideItem>
          <SideItem $h={71}>
            <Glyph width="18" height="18" viewBox="0 0 18 18" $weight={1.300}><path d="M9 0V18M0 9H18" /></Glyph>
          </SideItem>
          <SideRule />
          <SideItem $h={67}>
            <Glyph width="22" height="19" viewBox="0 0 22 19" $weight={1.700}><rect x="1" y="1" width="20" height="17" rx="3" /><path d="M15 1V18" /></Glyph>
          </SideItem>
          <SideItem $h={54}>
            <Glyph width="25" height="26" viewBox="-12.500 -13 25 26" $weight={1.800}>
              <circle r="3.400" />
              <path d="M-2.600-11.900H2.600L3.300-8.200L5.600-6.900L9-8.200L11.700-3.700L8.900-1.300V1.300L11.700 3.700L9 8.200L5.600 6.900L3.300 8.200L2.600 11.900H-2.600L-3.300 8.200L-5.600 6.900L-9 8.200L-11.700 3.700L-8.900 1.300V-1.300L-11.700-3.700L-9-8.200L-5.600-6.900L-3.300-8.200Z" />
            </Glyph>
          </SideItem>
        </Sidebar>
      </Middle>

      <Taskbar>
        <Slot $w={34} $ml={30}><WeatherIcon /></Slot>
        <TwoLines $align="flex-start" $ml={12} $w={120}>
          <Label $track={-0.26}>Top events</Label>
          <Label $track={-0.12} $color="#565a5f">Event brief</Label>
        </TwoLines>
        <Slot $w={66} $ml={254}><StartIcon /></Slot>
        <SearchBox>
          <Glyph width="23" height="23" viewBox="0 0 23 23" $weight={2.600} $color="#1f1f20">
            <circle cx="9.800" cy="9.800" r="8.300" /><path d="M15.800 16L21 21.500" />
          </Glyph>
          <Slot $w={15} />
          <Label $size={20.6} $track={-0.5} $color="#55585e">Search</Label>
          <Slot $w={68} $ml={137}><StewIcon /></Slot>
        </SearchBox>
        <AppButton><CopilotPre /></AppButton>
        <AppButton><StoreIcon /></AppButton>
        <AppButton $run><FolderIcon /></AppButton>
        <AppButton $active><EdgeIcon /></AppButton>
        <AppButton><PyCharmIcon /></AppButton>
        <AppButton><ChromeIcon /></AppButton>
        <AppButton $run><CodeIcon /></AppButton>
        <AppButton $run><NotepadIcon /></AppButton>
        <AppButton $run><WhatsAppIcon /><Badge>3</Badge></AppButton>
        <Slot $w={18} $ml={33}>
          <Glyph width="16" height="9" viewBox="0 0 16 9" $weight={2}><path d="M0 8.500L8 .5L16 8.500" /></Glyph>
        </Slot>
        <Slot $w={25} $ml={28}>
          <svg width="25" height="24" viewBox="0 0 25 24">
            <path d="M5 18.500Q.8 18 .8 13.500Q1 9.500 4.500 8.500Q6 2.500 11.500 2.500Q16 2.500 18 7.500Q23 7.500 23.500 12.500L20 18.500Z" fill="#a4a4a6" stroke="#2a2a2b" strokeWidth="1.500" />
            <path d="M1.500 14Q8 7 20 16L19 18H5Q2 18 1.500 14Z" fill="#dcdcdd" />
            <circle cx="18" cy="18" r="6.500" fill="#fff" />
            <path d="M13.500 17.500Q14 13.500 18 13.500Q20.500 13.500 22 15.500M22.500 18.500Q22 22.500 18 22.500Q15.500 22.500 14 20.500M22.300 12.800V16H19M13.700 23.200V20H17" stroke="#1670c8" strokeWidth="1.300" fill="none" />
          </svg>
        </Slot>
        <TwoLines $align="center" $ml={24} $w={40}>
          <Label $track={-0.28}>ENG</Label>
          <Label>IN</Label>
        </TwoLines>
        <Slot $w={24} $ml={25}>
          <Glyph width="24" height="18" viewBox="0 0 24 18" $weight={1.700}>
            <path d="M.8 6Q12-4.500 23.200 6M4.200 9.500Q12 2 19.800 9.500M7.800 12.800Q12 9 16.200 12.800" /><circle cx="12" cy="16" r="1.300" fill="#111" />
          </Glyph>
        </Slot>
        <Slot $w={24} $ml={12}>
          <Glyph width="24" height="20" viewBox="0 0 24 20" $weight={1.600}>
            <path d="M1 7V13H4.500L10.500 18.500V1.500L4.500 7ZM14 7Q15.500 10 14 13M17 4Q20.500 10 17 16M20 1.500Q25.500 10 20 18.500" />
          </Glyph>
        </Slot>
        <Slot $w={24} $ml={12}>
          <Glyph width="24" height="16" viewBox="0 0 24 16" $weight={1.800}>
            <rect x="1" y="1" width="19.500" height="14" rx="3" /><rect x="4" y="4" width="9" height="8" rx=".5" fill="#111" stroke="none" /><path d="M22.500 6.500V9.500" strokeWidth="2.500" />
          </Glyph>
        </Slot>
        <TwoLines $align="flex-end" $ml={18} $w={100}>
          <Label $track={-0.17}>06:46</Label>
          <Label $track={0.1}>22-11-2023</Label>
        </TwoLines>
        <Slot $w={20} $ml={13}>
          <svg width="20" height="23" viewBox="0 0 20 23">
            <path d="M2.300 9Q3 .5 10 .2Q17 .5 17.700 9V15L20 18.500H0L2.300 15ZM6.500 20H13.500Q13 22.800 10 22.800Q7 22.800 6.500 20Z" fill="#063f94" />
          </svg>
        </Slot>
      </Taskbar>
    </Screen>
  );
}
